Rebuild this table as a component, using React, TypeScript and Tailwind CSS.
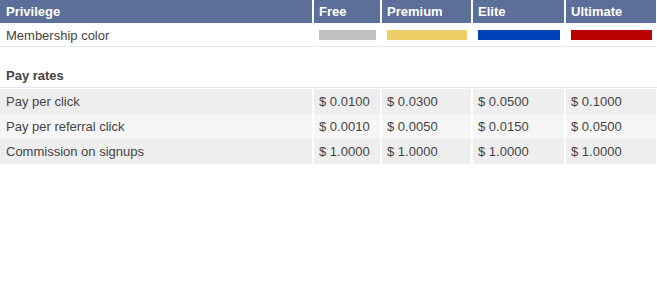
import React from 'react';

const cols = 'grid grid-cols-[312px_66px_89px_91px_90px] gap-x-[2px]';

const levels = [
  { name: 'Free', bar: 'bg-[#c0c0c0]' },
  { name: 'Premium', bar: 'bg-[#edcf68]' },
  { name: 'Elite', bar: 'bg-[#0040b8]' },
  { name: 'Ultimate', bar: 'bg-[#bb0000]' },
];

const rates = [
  { label: 'Pay per click', bg: 'bg-[#eeeeee]', values: ['0.0100', '0.0300', '0.0500', '0.1000'] },
  { label: 'Pay per referral click', bg: 'bg-[#f6f6f6]', values: ['0.0010', '0.0050', '0.0150', '0.0500'] },
  { label: 'Commission on signups', bg: 'bg-[#eeeeee]', values: ['1.0000', '1.0000', '1.0000', '1.0000'] },
];

const App: React.FC = () => {
  return (
    <div className="w-[657px] h-[306px] bg-white text-[13px] text-[#444] font-['Liberation_Sans',Arial,sans-serif]">
      {/* header */}
      <div className={`${cols} h-[22px] leading-[23px] text-white font-bold`}>
        <div className="bg-[#5b6f98] pl-[6px]">Privilege</div>
        {levels.map((l) => (
          <div key={l.name} className="bg-[#5b6f98] pl-[5px]">{l.name}</div>
        ))}
      </div>

      {/* membership color */}
      <div className={`${cols} mt-[2px]`}>
        <div className="h-[23px] leading-[24px] pl-[6px] border-b border-[#e6e6e6]">Membership color</div>
        {levels.map((l) => (
          <div key={l.name} className="h-[23px] pl-[5px] pr-[4px] pt-[6px] border-b border-[#e6e6e6]">
            <div className={`h-[10px] ${l.bar}`}></div>
          </div>
        ))}
      </div>

      {/* pay rates section */}
      <div className="mt-[18px] h-[23px] leading-[22px] pl-[6px] font-bold border-b border-[#e6e6e6]">Pay rates</div>

      <div className="mt-[1px] flex flex-col gap-y-[2px]">
        {rates.map((r) => (
          <div key={r.label} className={`${cols} h-[23px] leading-[25px]`}>
            <div className={`${r.bg} pl-[6px]`}>{r.label}</div>
            {r.values.map((v, i) => (
              <div key={i} className={`${r.bg} pl-[5px]`}>$ {v}</div>
            ))}
          </div>
        ))}
      </div>
    </div>
  );
};

export default App;
